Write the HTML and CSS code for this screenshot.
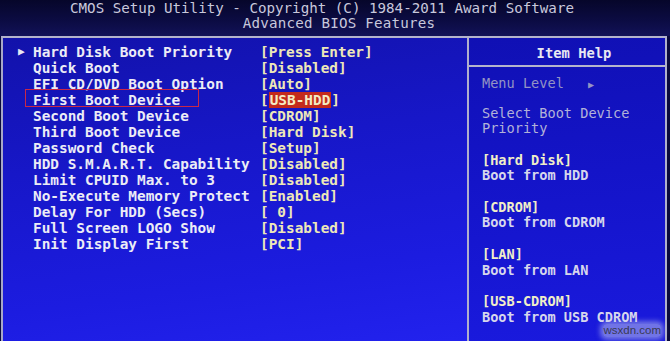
FILE: index.html
```html
<!DOCTYPE html>
<html>
<head>
<meta charset="utf-8">
<link rel="stylesheet" href="styles.css">
</head>
<body>
<div class="screen">
  <div class="header">
    <div class="title-1">CMOS Setup Utility - Copyright (C) 1984-2011 Award Software</div>
    <div class="title-2">Advanced BIOS Features</div>
  </div>
  <div class="frame">
    <div class="main">
      <div class="row"><span class="arrow">&#9654;</span><span class="label">Hard Disk Boot Priority</span><span class="value">[Press Enter]</span></div>
      <div class="row"><span class="arrow"></span><span class="label">Quick Boot</span><span class="value">[Disabled]</span></div>
      <div class="row"><span class="arrow"></span><span class="label">EFI CD/DVD Boot Option</span><span class="value">[Auto]</span></div>
      <div class="row marked"><span class="arrow"></span><span class="label">First Boot Device</span><span class="value">[<span class="sel">USB-HDD</span>]</span></div>
      <div class="row"><span class="arrow"></span><span class="label">Second Boot Device</span><span class="value">[CDROM]</span></div>
      <div class="row"><span class="arrow"></span><span class="label">Third Boot Device</span><span class="value">[Hard Disk]</span></div>
      <div class="row"><span class="arrow"></span><span class="label">Password Check</span><span class="value">[Setup]</span></div>
      <div class="row"><span class="arrow"></span><span class="label">HDD S.M.A.R.T. Capability</span><span class="value">[Disabled]</span></div>
      <div class="row"><span class="arrow"></span><span class="label">Limit CPUID Max. to 3</span><span class="value">[Disabled]</span></div>
      <div class="row"><span class="arrow"></span><span class="label">No-Execute Memory Protect</span><span class="value">[Enabled]</span></div>
      <div class="row"><span class="arrow"></span><span class="label">Delay For HDD (Secs)</span><span class="value">[ 0]</span></div>
      <div class="row"><span class="arrow"></span><span class="label">Full Screen LOGO Show</span><span class="value">[Disabled]</span></div>
      <div class="row"><span class="arrow"></span><span class="label">Init Display First</span><span class="value">[PCI]</span></div>
    </div>
    <div class="help">
      <div class="help-title">Item Help</div>
      <div class="help-body">
        <div class="menu-level">Menu Level <span class="level-arrow">&#9654;</span></div>
        <div class="group">
          <div class="dim">Select Boot Device</div>
          <div class="dim">Priority</div>
        </div>
        <div class="group">
          <div class="opt">[Hard Disk]</div>
          <div class="desc">Boot from HDD</div>
        </div>
        <div class="group">
          <div class="opt">[CDROM]</div>
          <div class="desc">Boot from CDROM</div>
        </div>
        <div class="group">
          <div class="opt">[LAN]</div>
          <div class="desc">Boot from LAN</div>
        </div>
        <div class="group">
          <div class="opt">[USB-CDROM]</div>
          <div class="desc">Boot from USB CDROM</div>
        </div>
      </div>
    </div>
  </div>
  <span class="watermark">wsxdn.com</span>
</div>
</body>
</html>
```

FILE: styles.css
```css
html, body {
  margin: 0;
  padding: 0;
  width: 670px;
  height: 341px;
  overflow: hidden;
  background: #0a0a3c;
}

.screen {
  position: relative;
  width: 670px;
  height: 341px;
  display: flex;
  flex-direction: column;
  font-family: "DejaVu Sans Mono", "Liberation Mono", monospace;
  font-weight: bold;
}

.header {
  height: 37px;
  padding-top: 1px;
  box-sizing: border-box;
  background: linear-gradient(to bottom, #06062a 0%, #0c0c44 60%, #121258 100%);
  color: #c8c8dc;
  font-size: 14.2px;
  line-height: 15px;
  text-align: center;
  font-weight: normal;
}

.title-1 {
  padding-right: 26px;
}

.title-2 {
  padding-left: 8px;
  letter-spacing: 0.2px;
}

.frame {
  flex: 1;
  display: flex;
  margin: 0 3px 0 1px;
  border-top: 2px solid #b4b4cc;
  border-left: 2px solid #a8a8c8;
  background: linear-gradient(172deg, #1212aa 0%, #1717c8 35%, #1c1ce0 70%, #2424f2 100%);
}

.main {
  width: 464px;
  padding: 6px 0 0 15px;
  box-sizing: border-box;
}

.row {
  position: relative;
  display: flex;
  height: 16px;
  line-height: 16px;
  font-size: 14.4px;
  white-space: pre;
}

.arrow {
  width: 15px;
  flex: none;
  color: #e8e8f4;
  font-size: 11px;
}

.label {
  width: 227px;
  flex: none;
  color: #ececf6;
}

.value {
  color: #eee8b8;
}

.sel {
  background: #c42a1c;
  color: #f4ecc4;
  padding: 0 1px;
}

.marked::after {
  content: "";
  position: absolute;
  left: 7px;
  top: -3px;
  width: 174px;
  height: 18px;
  border: 1px solid #c82848;
  box-sizing: border-box;
}

.help {
  flex: 1;
  display: flex;
  flex-direction: column;
  border-left: 2px solid #b0b0cc;
  border-right: 2px solid #b0b0cc;
  background: linear-gradient(175deg, #1010b4 0%, #1414c8 45%, #1a1ade 100%);
}

.help-title {
  height: 27px;
  border-bottom: 2px solid #b4b4cc;
  color: #e8e8f2;
  font-size: 13.8px;
  line-height: 31px;
  text-align: center;
  padding-left: 14px;
}

.help-body {
  padding: 6px 0 0 13px;
  font-size: 13.6px;
  line-height: 15.7px;
}

.menu-level {
  color: #9494c4;
  font-weight: normal;
  padding-top: 3px;
  margin-bottom: 12.7px;
  white-space: pre;
}

.level-arrow {
  font-size: 10px;
  margin-left: 16px;
}

.group {
  margin-bottom: 15.7px;
}

.dim {
  color: #b2b2d8;
  font-weight: normal;
}

.opt {
  color: #f0eec8;
}

.desc {
  color: #d6d6ec;
}

.watermark {
  position: absolute;
  right: 9px;
  bottom: 4px;
  font-family: "Liberation Sans", Arial, sans-serif;
  font-weight: normal;
  font-size: 11.5px;
  line-height: 13px;
  color: #3a3a52;
  background: rgba(200, 205, 240, 0.5);
  box-shadow: 0 0 5px 3px rgba(200, 205, 240, 0.5);
  border-radius: 4px;
}
```
